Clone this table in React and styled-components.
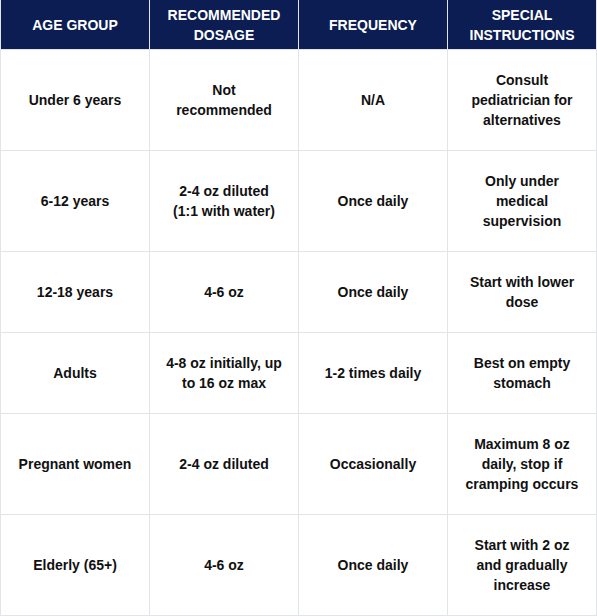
import React from "react";
import styled, { createGlobalStyle } from "styled-components";

const rows = [
  ["Under 6 years", "Not recommended", "N/A", "Consult pediatrician for alternatives"],
  ["6-12 years", "2-4 oz diluted (1:1 with water)", "Once daily", "Only under medical supervision"],
  ["12-18 years", "4-6 oz", "Once daily", "Start with lower dose"],
  ["Adults", "4-8 oz initially, up to 16 oz max", "1-2 times daily", "Best on empty stomach"],
  ["Pregnant women", "2-4 oz diluted", "Occasionally", "Maximum 8 oz daily, stop if cramping occurs"],
  ["Elderly (65+)", "4-6 oz", "Once daily", "Start with 2 oz and gradually increase"]
];

const headers = ["Age Group", "Recommended Dosage", "Frequency", "Special Instructions"];

export default () => (
  <>
    <GlobalStyle />
    <Table>
      <thead>
        <tr>
          {headers.map(h => (
            <HeadCell key={h}>{h}</HeadCell>
          ))}
        </tr>
      </thead>
      <tbody>
        {rows.map(row => (
          <tr key={row[0]}>
            {row.map((cell, i) => (
              <Cell key={i}>{cell}</Cell>
            ))}
          </tr>
        ))}
      </tbody>
    </Table>
  </>
);

const GlobalStyle = createGlobalStyle`
  body {
    margin: 0;
    background: #ffffff;
    font-family: "Liberation Sans", Arial, sans-serif;
  }
`;

const Table = styled.table`
  width: 597px;
  border-collapse: collapse;
  table-layout: fixed;
`;

const HeadCell = styled.th`
  background-color: #0b1d52;
  color: #ffffff;
  font-size: 14px;
  font-weight: bold;
  line-height: 20px;
  text-transform: uppercase;
  text-align: center;
  padding: 5px 16px 4px;
  height: 40px;
  border: 1px solid #e3e4e8;
  border-top: none;
`;

const Cell = styled.td`
  color: #111111;
  font-size: 14px;
  font-weight: bold;
  line-height: 20px;
  text-align: center;
  padding: 20px 16px;
  border: 1px solid #e3e4e8;
`;
